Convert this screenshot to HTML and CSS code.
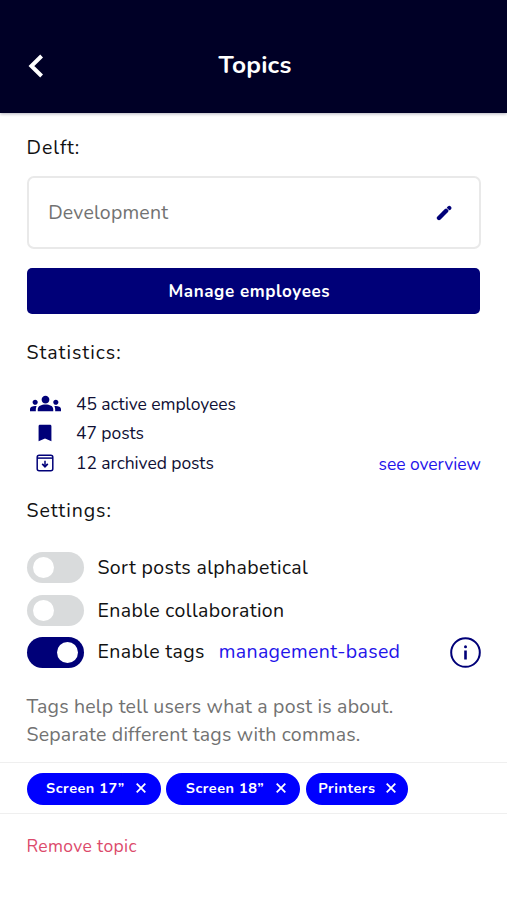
FILE: index.html
```html
<!DOCTYPE html>
<html lang="en">
<head>
<meta charset="utf-8">
<title>Topics</title>
<link rel="stylesheet" href="styles.css">
</head>
<body>
<header class="header">
  <svg class="back" viewBox="0 0 16 24"><path d="M13.6 2 3.4 12l10.2 10" fill="none" stroke="#fff" stroke-width="4"/></svg>
  <h1 class="title">Topics</h1>
</header>
<main>
  <section class="content">
    <h2 class="heading heading-location">Delft:</h2>
    <div class="field">
      <span>Development</span>
      <svg class="edit" viewBox="0 0 16 16"><path d="M3 13 10.2 5.8" stroke="#000078" stroke-width="4.4" stroke-linecap="round"/><path d="M13 3.2 13.3 2.9" stroke="#000078" stroke-width="4.2" stroke-linecap="round"/><path d="m10.2 2.6 3.4 3.4" stroke="#fff" stroke-width=".8"/></svg>
    </div>
    <button class="manage">Manage employees</button>
    <h2 class="heading heading-stats">Statistics:</h2>
    <div class="stats">
      <ul class="stat-list">
        <li class="stat"><span class="stat-icon"><svg width="31" height="31" viewBox="0 0 24 24" fill="#000078"><path d="M12 12.75c1.63 0 3.07.39 4.24.9 1.08.48 1.76 1.56 1.76 2.73V18H6v-1.61c0-1.18.68-2.26 1.76-2.73 1.17-.52 2.61-.91 4.24-.91zM4 13c1.1 0 2-.9 2-2s-.9-2-2-2-2 .9-2 2 .9 2 2 2zm1.13 1.1C4.76 14.04 4.39 14 4 14c-.99 0-1.93.21-2.78.58C.48 14.9 0 15.62 0 16.43V18h4.5v-1.61c0-.83.23-1.61.63-2.29zM20 13c1.1 0 2-.9 2-2s-.9-2-2-2-2 .9-2 2 .9 2 2 2zm4 3.43c0-.81-.48-1.53-1.22-1.85-.85-.37-1.79-.58-2.78-.58-.39 0-.76.04-1.13.1.4.68.63 1.46.63 2.29V18H24v-1.57zM12 6c1.66 0 3 1.34 3 3s-1.34 3-3 3-3-1.34-3-3 1.34-3 3-3z"/></svg></span>45 active employees</li>
        <li class="stat"><span class="stat-icon"><svg width="22" height="22" viewBox="0 0 24 24" fill="#000078"><path d="M17.5 3h-11C5.7 3 5 3.7 5 4.5V21l7-3 7 3V4.5c0-.8-.7-1.5-1.5-1.5z"/></svg></span>47 posts</li>
        <li class="stat"><span class="stat-icon"><svg width="18" height="18" viewBox="0 0 18 18" fill="none" stroke="#000078"><rect x="1.2" y="1.2" width="15.6" height="15.6" rx="2" stroke-width="1.5"/><path d="M1.5 4.1h15" stroke-width="1.5"/><path d="M9 6.8v5.6" stroke-width="1.5"/><path d="m6.2 9.9 2.8 2.8 2.8-2.8" stroke-width="1.7"/></svg></span>12 archived posts</li>
      </ul>
      <a class="overview">see overview</a>
    </div>
    <h2 class="heading heading-settings">Settings:</h2>
    <div class="settings">
      <div class="setting"><span class="toggle"></span><span class="label">Sort posts alphabetical</span></div>
      <div class="setting"><span class="toggle"></span><span class="label">Enable collaboration</span></div>
      <div class="setting setting-tags"><span class="toggle toggle-on"></span><span class="label">Enable tags</span><a class="mode">management-based</a>
        <svg class="info" viewBox="0 0 31 31" fill="none" stroke="#000078"><circle cx="15.5" cy="15.5" r="14.3" stroke-width="2"/><path d="M15.5 13.5v9" stroke-width="2.6"/><circle cx="15.5" cy="9.8" r="1.5" fill="#000078" stroke="none"/></svg>
      </div>
    </div>
    <p class="hint">Tags help tell users what a post is about.<br>Separate different tags with commas.</p>
  </section>
  <div class="tags">
    <span class="tag">Screen 17”<svg class="close" viewBox="0 0 10 10"><path d="m.7.7 8.6 8.6M9.3.7.7 9.3"/></svg></span>
    <span class="tag">Screen 18”<svg class="close" viewBox="0 0 10 10"><path d="m.7.7 8.6 8.6M9.3.7.7 9.3"/></svg></span>
    <span class="tag tag-short">Printers<svg class="close" viewBox="0 0 10 10"><path d="m.7.7 8.6 8.6M9.3.7.7 9.3"/></svg></span>
  </div>
  <a class="remove">Remove topic</a>
</main>
</body>
</html>
```
FILE: styles.css
```css
* { box-sizing: border-box; }
body {
  margin: 0;
  background: #fff;
  color: #111;
  font-family: Nunito, Lato, sans-serif;
  height: 900px;
  overflow: hidden;
}
svg { display: block; flex: none; }
.header {
  display: grid;
  grid-template-columns: 1fr auto 1fr;
  align-items: center;
  height: 113px;
  padding: 18px 26px 0 28px;
  background: #000026;
  box-shadow: 0 1px 3px rgba(0, 0, 38, .3);
}
.back { width: 16px; height: 24px; }
.title {
  margin: -1px 0 0 1px;
  color: #fff;
  font-size: 24.5px;
  line-height: 30px;
  font-weight: 700;
  letter-spacing: .2px;
}
.content { padding: 22.5px 26px 0 26.5px; }
.heading {
  margin: 0;
  font-size: 19.5px;
  line-height: 24px;
  font-weight: 400;
  letter-spacing: 1px;
}
.field {
  display: flex;
  align-items: center;
  justify-content: space-between;
  height: 73px;
  margin-top: 16.5px;
  padding: 0 27.5px 0 19.7px;
  border: 2px solid #e9e9e9;
  border-radius: 7px;
  color: #727272;
  font-size: 19.5px;
  letter-spacing: .2px;
}
.edit { width: 16px; height: 16px; margin-top: 1px; }
.manage {
  display: block;
  width: 453.6px;
  height: 46px;
  margin: 19px 0 26.5px;
  padding: 0 8px 0 0;
  border: 0;
  border-radius: 5px;
  background: #000078;
  color: #fff;
  font: 700 17px Nunito, Lato, sans-serif;
  letter-spacing: .6px;
}
.stats {
  display: flex;
  justify-content: space-between;
  align-items: flex-end;
  margin: 24.5px 0 21px;
  color: #101035;
  font-size: 17.5px;
  letter-spacing: -.06px;
}
.stat-list { margin: 0; padding: 0; list-style: none; }
.stat { display: flex; align-items: center; height: 29.5px; }
.stat-icon { display: flex; justify-content: center; width: 37px; margin-right: 12.5px; }
.overview { color: #1f14ea; line-height: 27px; }
.heading-settings { letter-spacing: .95px; }
.settings { margin-top: 29px; }
.setting { display: flex; align-items: center; height: 31px; font-size: 19.5px; line-height: 24px; }
.setting + .setting { margin-top: 12px; }
.setting + .setting-tags { margin-top: 11px; }
.toggle {
  display: flex;
  align-items: center;
  width: 57.5px;
  height: 31px;
  padding: 0 6.5px;
  border-radius: 16px;
  background: #d9dbdc;
}
.toggle::before { content: ""; width: 21px; height: 21px; border-radius: 50%; background: #fff; }
.toggle-on { justify-content: flex-end; background: #000078; }
.toggle-on::before { margin-right: -.5px; }
.label { margin: 1px 0 0 13.5px; letter-spacing: .37px; }
.mode { margin: 0 0 0 14px; color: #1f14ea; letter-spacing: .34px; }
.setting-tags .label { margin-top: 0; }
.info { width: 31px; height: 31px; margin-left: auto; }
.hint { margin: 25px 0 13px; color: #727272; font-size: 19.5px; line-height: 28px; letter-spacing: .21px; }
.tags {
  display: flex;
  align-items: center;
  gap: 5.5px;
  height: 52px;
  padding: 2px 0 0 26.6px;
  border: solid #efefef;
  border-width: 1px 0;
}
.tag {
  display: flex;
  align-items: center;
  justify-content: space-between;
  width: 134.2px;
  height: 32px;
  padding: 0 14.8px 2px 19.5px;
  border-radius: 16px;
  background: #00f;
  color: #fff;
  font-size: 14.5px;
  font-weight: 700;
  letter-spacing: .5px;
}
.tag-short { width: 102px; padding: 0 12.3px 2px; }
.close { width: 10px; height: 10px; margin-top: 1px; fill: none; stroke: #fff; stroke-width: 1.8; }
.remove { display: block; margin: 20px 0 0 26.5px; color: #dc4a6b; font-size: 17.5px; line-height: 24px; letter-spacing: .35px; }
```
